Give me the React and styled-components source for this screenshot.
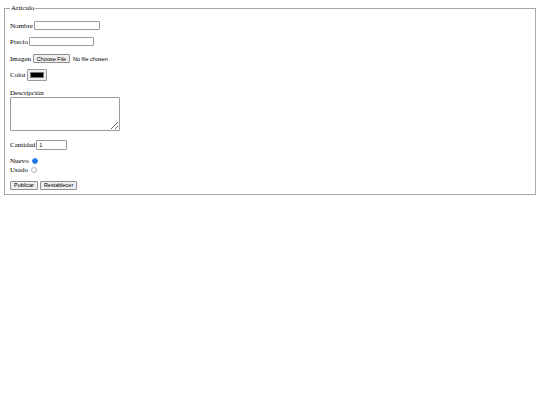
import React from 'react'
import styled, { createGlobalStyle } from 'styled-components'

const Global = createGlobalStyle`
    body {
        margin: 4px;
        font-family: "Liberation Serif", "Times New Roman", serif;
        font-size: 7px;
        line-height: 8px;
        color: #000;
        background: #fff;
    }
`

const Fieldset = styled.fieldset`
    margin: 0;
    padding: 0 5px 4px;
    border: 1px solid #a8a8a8;
    min-width: 0;
`

const Legend = styled.legend`
    padding: 0 1px;
    font-size: 7px;
    line-height: 8px;
`

const Row = styled.div`
    display: flex;
    align-items: center;
    height: ${p => p.$h || 9}px;
    margin-top: ${p => p.$gap}px;
    gap: 1px;
`

const Stack = styled.div`
    display: flex;
    flex-direction: column;
    align-items: flex-start;
    margin-top: ${p => p.$gap}px;
`

const Label = styled.label`
    white-space: nowrap;
`

const TextInput = styled.input`
    box-sizing: border-box;
    width: ${p => p.$w}px;
    height: ${p => p.$h || 9}px;
    padding: 0 2px;
    margin: 0;
    border: 1px solid #9a9a9a;
    border-radius: 1px;
    font-family: "Liberation Sans", Arial, sans-serif;
    font-size: 5.5px;
    background: #fff;
    outline: none;
    -moz-appearance: textfield;
    &::-webkit-inner-spin-button,
    &::-webkit-outer-spin-button {
        -webkit-appearance: none;
        margin: 0;
    }
`

const FileButton = styled.label`
    box-sizing: border-box;
    display: flex;
    align-items: center;
    justify-content: center;
    width: 37px;
    height: 9px;
    margin-left: 1px;
    border: 1px solid #8f8f8f;
    border-radius: 1px;
    background: #efefef;
    font-family: "Liberation Sans", Arial, sans-serif;
    font-size: 5.5px;
    input {
        display: none;
    }
`

const FileText = styled.span`
    margin-left: 2px;
    font-family: "Liberation Sans", Arial, sans-serif;
    font-size: 5.5px;
`

const Swatch = styled.label`
    box-sizing: border-box;
    display: flex;
    align-items: center;
    justify-content: center;
    width: 20px;
    height: 12px;
    padding: 2px;
    border: 1px solid #9a9a9a;
    border-radius: 1px;
    background: #efefef;
    input {
        display: none;
    }
`

const SwatchColor = styled.span`
    display: block;
    width: 100%;
    height: 100%;
    background: ${p => p.$color};
    border: 1px solid #777;
    box-sizing: border-box;
`

const TextArea = styled.textarea`
    box-sizing: border-box;
    width: 110px;
    height: 34px;
    margin: 0;
    padding: 1px;
    border: 1px solid #9a9a9a;
    border-radius: 1px;
    font-size: 6px;
    resize: both;
    outline: none;
`

const Radio = styled.input`
    appearance: none;
    box-sizing: border-box;
    width: 6px;
    height: 6px;
    margin: 0 0 0 3px;
    border: 0.5px solid #b4b4b4;
    border-radius: 50%;
    background: #fff;
    &:checked {
        border: 0.5px solid #1a73e8;
        background: radial-gradient(circle, #1a73e8 0 1.7px, #cfe0fb 2px);
    }
`

const RadioRow = styled.div`
    display: flex;
    align-items: center;
    height: 9px;
`

const Button = styled.button`
    box-sizing: border-box;
    height: 9px;
    padding: 0 3px;
    margin: 0 1px 0 0;
    border: 1px solid #8f8f8f;
    border-radius: 1px;
    background: #efefef;
    color: #000;
    font-family: "Liberation Sans", Arial, sans-serif;
    font-size: 5.5px;
    line-height: 7px;
`

const App = () => {
    return (
        <>
            <Global />
            <form>
                <Fieldset>
                    <Legend>Artículo</Legend>
                    <Row $gap={9}>
                        <Label htmlFor="nombre">Nombre</Label>
                        <TextInput type="text" id="nombre" $w={66} />
                    </Row>
                    <Row $gap={7}>
                        <Label htmlFor="precio">Precio</Label>
                        <TextInput type="text" id="precio" $w={65} />
                    </Row>
                    <Row $gap={8}>
                        <Label>Imagen</Label>
                        <FileButton>
                            Choose File
                            <input type="file" />
                        </FileButton>
                        <FileText>No file chosen</FileText>
                    </Row>
                    <Row $gap={6} $h={12}>
                        <Label>Color</Label>
                        <Swatch>
                            <SwatchColor $color="#000" />
                            <input type="color" defaultValue="#000000" />
                        </Swatch>
                    </Row>
                    <Stack $gap={8}>
                        <Label htmlFor="descripcion">Descripción</Label>
                        <TextArea id="descripcion" />
                    </Stack>
                    <Row $gap={9} $h={10}>
                        <Label htmlFor="cantidad">Cantidad</Label>
                        <TextInput type="number" id="cantidad" $w={31} $h={10} defaultValue={1} />
                    </Row>
                    <Stack $gap={6}>
                        <RadioRow>
                            <Label htmlFor="nuevo">Nuevo</Label>
                            <Radio type="radio" name="estado" id="nuevo" defaultChecked />
                        </RadioRow>
                        <RadioRow>
                            <Label htmlFor="usado">Usado</Label>
                            <Radio type="radio" name="estado" id="usado" />
                        </RadioRow>
                    </Stack>
                    <Row $gap={7}>
                        <Button type="submit">Publicar</Button>
                        <Button type="reset">Restablecer</Button>
                    </Row>
                </Fieldset>
            </form>
        </>
    )
}

export default App
